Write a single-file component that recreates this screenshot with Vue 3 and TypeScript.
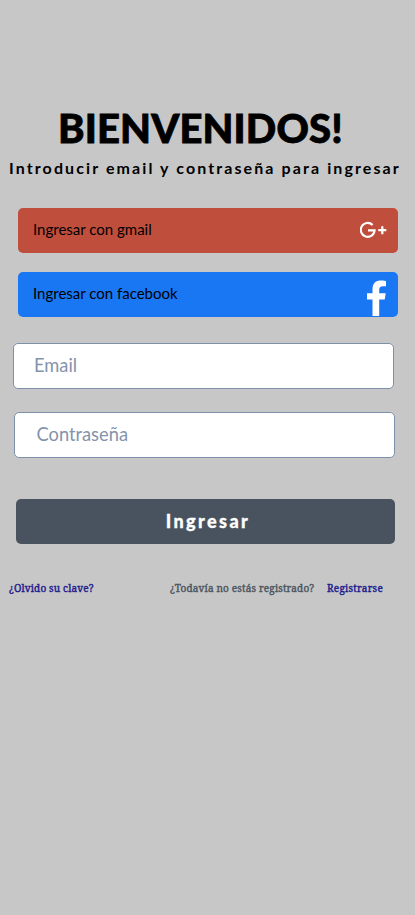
<script setup lang="ts">
import { ref } from 'vue'

const email = ref<string>('')
const password = ref<string>('')
</script>

<template>
  <main class="login">
    <header class="heading">
      <h1 class="title">BIENVENIDOS!</h1>
      <p class="subtitle">Introducir email y contraseña para ingresar</p>
    </header>
    <section class="social">
      <button class="provider google" type="button">
        <span>Ingresar con gmail</span>
        <svg class="google-icon" width="27" height="18" viewBox="0 0 27 18" fill="none" stroke="#fff" stroke-width="2.200">
          <path d="M12.600 4A6.900 6.900 0 1 0 14.600 9.300H8" />
          <path d="M22.300 5.200v8M18.300 9.200h8" />
        </svg>
      </button>
      <button class="provider facebook" type="button">
        <span>Ingresar con facebook</span>
        <svg class="facebook-icon" width="19" height="36" viewBox="0 0 19 36" fill="#fff">
          <path d="M5.500 36V19.500H0v-6.300h5.500V9C5.500 3 9 .5 14 .5c2.500 0 5 .5 5 .5v5.300h-3c-3 0-3.800 1.700-3.800 3.400v3.500h6.500l-1 6.300h-5.500V36z" />
        </svg>
      </button>
    </section>
    <form class="form" @submit.prevent>
      <input v-model="email" class="field email" type="email" placeholder="Email">
      <input v-model="password" class="field password" type="password" placeholder="Contraseña">
      <button class="submit" type="submit">Ingresar</button>
    </form>
    <footer class="links">
      <a class="link forgot">¿Olvido su clave?</a>
      <span class="question">¿Todavía no estás registrado?</span>
      <a class="link register">Registrarse</a>
    </footer>
  </main>
</template>

<style>
body {
  background: #c7c7c7;
}
</style>

<style scoped>
.login {
  box-sizing: border-box;
  min-height: 915px;
  padding-top: 103px;
  background: #c7c7c7;
  font-family: Lato, sans-serif;
  color: #000;
}
.title {
  margin: 0 0 0 58px;
  font-size: 40px;
  line-height: 50px;
  font-weight: 900;
  letter-spacing: 0.15px;
  -webkit-text-stroke: 0.8px #000;
  white-space: nowrap;
}
.subtitle {
  margin: 5px 0 0 9px;
  font-size: 16px;
  line-height: 20px;
  font-weight: 700;
  letter-spacing: 2.1px;
  white-space: nowrap;
}
.social {
  display: flex;
  flex-direction: column;
  gap: 19px;
  margin: 30px 17px 0 18px;
}
.provider {
  display: flex;
  justify-content: space-between;
  align-items: flex-start;
  box-sizing: border-box;
  height: 45px;
  padding: 0 12px 0 15px;
  border: 0;
  border-radius: 5px;
  font: 400 15px/43px Lato, sans-serif;
  color: #000;
}
.google {
  padding-right: 11px;
  background: #c04e3c;
}
.facebook {
  background: #1977f3;
}
.google-icon {
  margin-top: 13px;
}
.facebook-icon {
  margin-top: 8px;
}
.form {
  display: flex;
  flex-direction: column;
  margin-top: 26px;
}
.field {
  box-sizing: border-box;
  width: 381px;
  height: 46px;
  border: 1px solid #7f90aa;
  border-radius: 5px;
  background: #fff;
  font: 400 18.3px Lato, sans-serif;
  outline: 0;
}
.field::placeholder {
  color: #8493ab;
  opacity: 1;
}
.email {
  margin-left: 13px;
  padding: 0 20px 2px;
}
.password {
  margin: 23px 0 0 14px;
  padding: 0 21.5px 2px;
}
.submit {
  width: 379px;
  height: 45px;
  margin: 41px 0 0 16px;
  padding: 0 0 2px 5px;
  border: 0;
  border-radius: 5px;
  background: #49535f;
  color: #fff;
  font: 900 18px Lato, sans-serif;
  letter-spacing: 2.4px;
  -webkit-text-stroke: 0.3px #fff;
}
.links {
  display: flex;
  margin: 37px 0 0 9px;
  font: 400 10px/14px "Noto Serif", "DejaVu Serif Condensed", "DejaVu Serif", serif;
  letter-spacing: 0.17px;
  color: #4b5560;
  -webkit-text-stroke: 0.4px currentColor;
  white-space: nowrap;
}
.link {
  color: #211b8e;
}
.forgot {
  width: 161px;
}
.question {
  width: 157px;
}
.register {
  letter-spacing: 0.25px;
}
</style>
